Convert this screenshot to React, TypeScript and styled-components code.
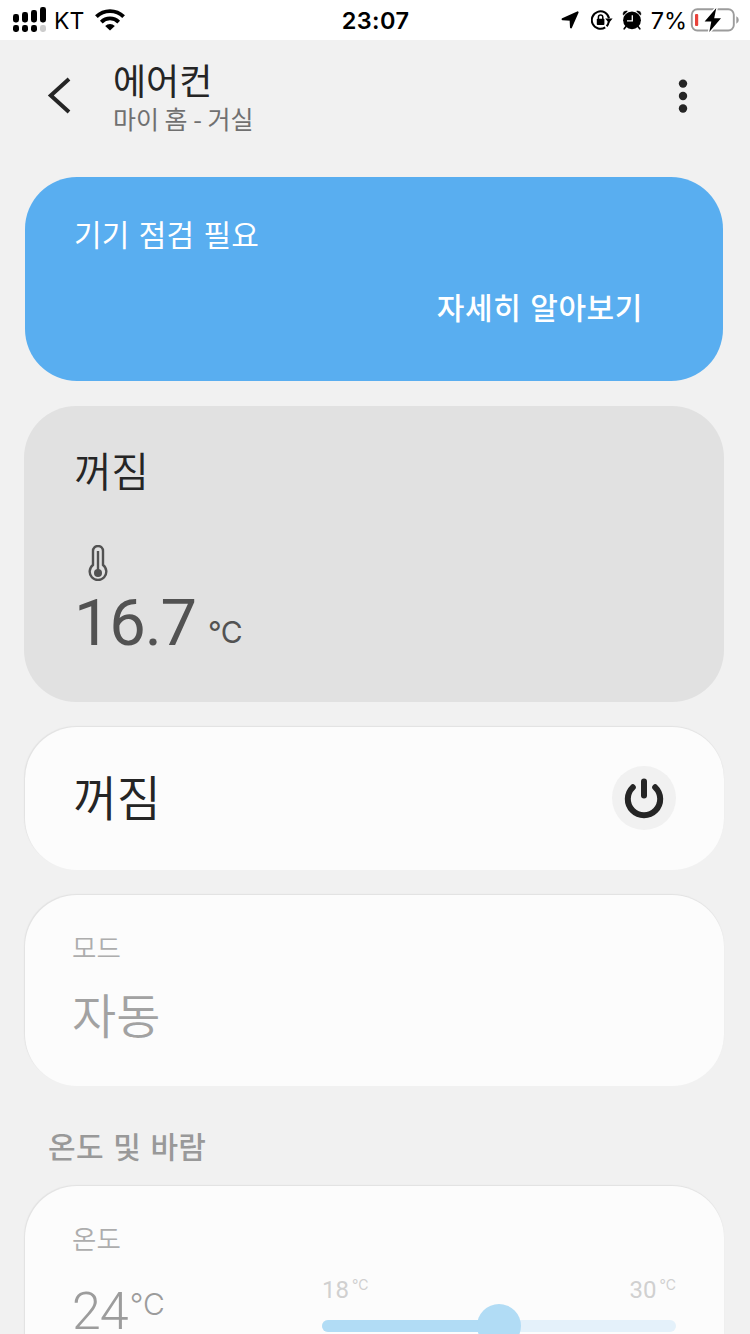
import React from 'react';
import styled, { createGlobalStyle } from 'styled-components';

const GlobalStyle = createGlobalStyle`
  * { box-sizing: border-box; }
  html, body { margin: 0; padding: 0; background: #f1f1f1; overflow: hidden; }
  body { font-family: Roboto, "Noto Sans CJK KR", sans-serif; color: #252525; }
`;

const Screen = styled.div`
  width: 750px;
  height: 1334px;
  overflow: hidden;
  display: flex;
  flex-direction: column;
  background: #f1f1f1;
`;

const StatusBar = styled.div`
  flex: none;
  height: 40px;
  display: grid;
  grid-template-columns: 1fr auto 1fr;
  align-items: center;
  padding: 0 10px 0 13px;
  background: #fff;
  color: #000;
  font-family: Inter, "Liberation Sans", sans-serif;
`;

const StatusGroup = styled.div<{ $end?: boolean }>`
  display: flex;
  align-items: center;
  justify-content: ${(p) => (p.$end ? 'flex-end' : 'flex-start')};
  height: 40px;
  svg { flex: none; display: block; }
`;

const StatusText = styled.span<{ $weight?: number; $size?: number; $spacing?: number }>`
  font-size: ${(p) => p.$size ?? 23}px;
  font-weight: ${(p) => p.$weight ?? 400};
  letter-spacing: ${(p) => p.$spacing ?? 0}px;
  line-height: 38px;
  padding-top: 2px;
  white-space: nowrap;
`;

const Clock = styled(StatusText)`
  padding-right: 2px;
`;

const Header = styled.header`
  flex: none;
  height: 137px;
  display: flex;
  align-items: flex-start;
  padding: 19px 57px 0 45px;
`;

const IconButton = styled.button<{ $width: number; $top: number }>`
  border: 0;
  padding: 0;
  background: none;
  width: ${(p) => p.$width}px;
  height: 40px;
  margin-top: ${(p) => p.$top}px;
  display: flex;
  svg { display: block; }
`;

const Titles = styled.div`
  flex: 1;
  padding-left: 38px;
`;

const Text = styled.div<{
  $size: number; $line: number; $weight?: number; $color?: string; $spacing?: number; $word?: number;
}>`
  font-family: "Noto Sans CJK KR", sans-serif;
  font-size: ${(p) => p.$size}px;
  line-height: ${(p) => p.$line}px;
  font-weight: ${(p) => p.$weight ?? 400};
  color: ${(p) => p.$color ?? '#252525'};
  letter-spacing: ${(p) => p.$spacing ?? 0}px;
  word-spacing: ${(p) => p.$word ?? 0}px;
  white-space: nowrap;
`;

const Card = styled.section<{ $height: number; $gap: number; $pad: string }>`
  flex: none;
  height: ${(p) => p.$height}px;
  margin: 0 26px ${(p) => p.$gap}px 25px;
  padding: ${(p) => p.$pad};
  border-radius: 52px;
  background: #fcfcfc;
  box-shadow: -0.5px -1px 1px #e2e2e2;
`;

const AlertCard = styled(Card)`
  margin-right: 27px;
  background: #59aef0;
  box-shadow: none;
  display: flex;
  flex-direction: column;
  justify-content: space-between;
`;

const AlertAction = styled(Text)`
  align-self: flex-end;
`;

const StateCard = styled(Card)`
  margin-left: 24px;
  background: #e1e1e1;
  box-shadow: none;
`;

const PowerCard = styled(Card)`
  display: flex;
  align-items: flex-start;
  justify-content: space-between;
`;

const PowerButton = styled.button`
  width: 64px;
  height: 64px;
  margin-top: 6px;
  border: 0;
  padding: 0;
  border-radius: 50%;
  background: #f1f1f1;
  svg { display: block; }
`;

const ThermoIcon = styled.svg`
  display: block;
  margin: 51px 0 0 14px;
`;

const Reading = styled.div<{ $top: number; $gap: number; $align?: string }>`
  display: flex;
  align-items: ${(p) => p.$align ?? 'baseline'};
  gap: ${(p) => p.$gap}px;
  margin-top: ${(p) => p.$top}px;
`;

const Num = styled.span<{
  $size: number; $line: number; $color: string; $weight?: number; $spacing?: number;
}>`
  font-family: Roboto, sans-serif;
  font-size: ${(p) => p.$size}px;
  line-height: ${(p) => p.$line}px;
  font-weight: ${(p) => p.$weight ?? 400};
  color: ${(p) => p.$color};
  letter-spacing: ${(p) => p.$spacing ?? 0}px;
  white-space: nowrap;
`;

const Unit = styled(Num)`
  font-family: Inter, sans-serif;
`;

const RoomUnit = styled(Unit)`
  margin-bottom: 5px;
`;

const SectionTitle = styled(Text)`
  flex: none;
  margin: 0 0 20px 48px;
`;

const TempRow = styled.div`
  display: flex;
  justify-content: space-between;
  margin-top: 14px;
`;

const SliderBox = styled.div`
  width: 354px;
  padding-top: 6px;
`;

const Labels = styled.div`
  display: flex;
  justify-content: space-between;
`;

const Track = styled.div`
  display: flex;
  align-items: center;
  height: 12px;
  margin-top: 16px;
  border-radius: 6px;
  background: #e4f1fa;
`;

const Fill = styled.div`
  height: 12px;
  border-radius: 6px 0 0 6px;
  background: #b1dcf5;
`;

const Thumb = styled.div`
  flex: none;
  width: 44px;
  height: 44px;
  margin-left: -22px;
  border-radius: 50%;
  background: #b1dcf5;
`;

const Signal = () => (
  <svg width="34" height="26" viewBox="0 0 34 26">
    <rect x="0" y="7" width="6" height="8.5" rx="2.4" />
    <rect x="9" y="5" width="6" height="10.5" rx="2.4" />
    <rect x="18" y="3" width="6" height="12.5" rx="2.4" />
    <rect x="27" y="0" width="6" height="15.5" rx="2.4" />
    <rect x="0" y="18" width="6" height="7" rx="2.4" />
    <rect x="9" y="18" width="6" height="7" rx="2.4" />
    <rect x="18" y="18" width="6" height="7" rx="2.4" />
    <rect x="27" y="18" width="6" height="7" rx="2.4" fill="#ccc" />
  </svg>
);

const Wifi = () => (
  <svg width="30" height="22" viewBox="0 0 30 22" fill="none" stroke="#000">
    <path d="M1.4 7.6A19.6 19.6 0 0 1 28.6 7.6" strokeWidth="3.9" />
    <path d="M6.3 13.1A12.2 12.2 0 0 1 23.7 13.1" strokeWidth="3.8" />
    <path d="M10.2 17A6.8 6.8 0 0 1 19.8 17L15 21.6Z" fill="#000" stroke="none" />
  </svg>
);

const LocationArrow = () => (
  <svg width="18" height="18" viewBox="0 0 18 18" stroke="#000" strokeWidth="2" strokeLinejoin="round">
    <path d="M16.600 1.400 10 16.400 9.600 8.800 1.600 8.200Z" />
  </svg>
);

const RotationLock = () => (
  <svg width="22" height="20" viewBox="0 0 22 20" fill="none" stroke="#000">
    <path d="M14.200 17.400A8.700 8.700 0 1 1 18 8.200" strokeWidth="2" />
    <path d="M17.800 11.600A8.700 8.700 0 0 1 15.600 16.200" strokeWidth="2" />
    <path d="M14.200 8.400H21.600L17.900 13Z" fill="#000" stroke="none" />
    <rect x="5.800" y="8.700" width="7.600" height="6.400" rx=".8" fill="#000" stroke="none" />
    <path d="M7.400 9V7.200A2.200 2.200 0 0 1 11.800 7.200V9" strokeWidth="1.500" />
  </svg>
);

const Alarm = () => (
  <svg width="20" height="20" viewBox="0 0 20 20">
    <circle cx="10" cy="10.300" r="8.900" />
    <path d="M.8 5Q0 .8 4.500.4L6.200 1 1.600 5.600ZM19.200 5Q20 .8 15.500.4L13.800 1 18.400 5.600Z" stroke="#fff" strokeWidth=".5" />
    <path d="M4 16.500 2.200 18.800M16 16.500 17.800 18.800" stroke="#000" strokeWidth="1.700" strokeLinecap="round" />
    <path d="M10.300 5.200V10.900H5" fill="none" stroke="#fff" strokeWidth="1.300" />
  </svg>
);

const Battery = () => (
  <svg width="50" height="24" viewBox="0 0 50 24">
    <rect x="1.800" y="1.300" width="42" height="21.200" rx="5.500" fill="#fff" stroke="#9c9c9c" strokeWidth="1.900" />
    <path d="M46.300 8.300Q48.800 9.500 48.800 12 48.800 14.500 46.300 15.700Z" fill="#9c9c9c" />
    <rect x="5" y="6" width="3.200" height="12" rx="1" fill="#e8433c" />
    <path d="M26.300 0 14.600 13.400H21.300L19.300 24 31 10.200H24.200Z" stroke="#fff" strokeWidth="3" />
    <path d="M26.300 0 14.600 13.400H21.300L19.300 24 31 10.200H24.200Z" />
  </svg>
);

const Gap = styled.span<{ $w: number }>`
  flex: none;
  width: ${(p) => p.$w}px;
`;

export default function App() {
  return (
    <>
      <GlobalStyle />
      <Screen>
        <StatusBar>
          <StatusGroup>
            <Signal />
            <Gap $w={7} />
            <StatusText>KT</StatusText>
            <Gap $w={11} />
            <Wifi />
          </StatusGroup>
          <Clock $weight={600} $size={23.5} $spacing={0.4}>23:07</Clock>
          <StatusGroup $end>
            <LocationArrow />
            <Gap $w={12} />
            <RotationLock />
            <Gap $w={9} />
            <Alarm />
            <Gap $w={9} />
            <StatusText $size={23.5}>7%</StatusText>
            <Gap $w={3} />
            <Battery />
          </StatusGroup>
        </StatusBar>

        <Header>
          <IconButton $width={30} $top={17} aria-label="뒤로">
            <svg width="30" height="40" viewBox="0 0 30 40" fill="none" stroke="#252525" strokeWidth="4">
              <path d="M24 3 5.800 19.500 24 36" />
            </svg>
          </IconButton>
          <Titles>
            <Text $size={36} $line={40}>에어컨</Text>
            <Text $size={25} $line={38} $color="#707070">마이 홈 - 거실</Text>
          </Titles>
          <IconButton $width={20} $top={17} aria-label="더보기">
            <svg width="20" height="40" viewBox="0 0 20 40" fill="#252525">
              <circle cx="10" cy="7.600" r="4.200" />
              <circle cx="10" cy="20" r="4.200" />
              <circle cx="10" cy="32.500" r="4.200" />
            </svg>
          </IconButton>
        </Header>

        <AlertCard $height={204} $gap={25} $pad="35px 80px 54px 49px">
          <Text $size={30} $line={42} $color="#fff" $spacing={0.2} $word={2.2}>기기 점검 필요</Text>
          <AlertAction $size={30} $line={42} $weight={500} $color="#fff" $spacing={0.6} $word={1.5}>
            자세히 알아보기
          </AlertAction>
        </AlertCard>

        <StateCard $height={296} $gap={25} $pad="38px 50px">
          <Text $size={41} $line={50} $weight={350} $spacing={-0.5}>꺼짐</Text>
          <ThermoIcon width="20" height="38" viewBox="0 0 20 38" fill="none" stroke="#525252">
            <path d="M5 20V6A5 5 0 0 1 15 6V20A8.300 8.300 0 1 1 5 20Z" strokeWidth="2.400" />
            <path d="M10 6V27" strokeWidth="2.400" />
            <circle cx="10" cy="28" r="4" fill="#525252" stroke="none" />
          </ThermoIcon>
          <Reading $top={2} $gap={12} $align="flex-end">
            <Num $size={65} $line={76} $color="#525252" $spacing={-1.2}>16.7</Num>
            <RoomUnit $size={30} $line={48} $color="#525252" $spacing={-0.5}>°C</RoomUnit>
          </Reading>
        </StateCard>

        <PowerCard $height={143} $gap={25} $pad="33px 48px 0 48px">
          <Text $size={48} $line={70} $weight={350} $spacing={-0.5}>꺼짐</Text>
          <PowerButton aria-label="전원">
            <svg width="64" height="64" viewBox="0 0 64 64" fill="none" stroke="#252525" strokeWidth="6" strokeLinecap="round">
              <path d="M20.800 21.300A16.200 16.200 0 1 0 43.200 21.300" />
              <path d="M32 15.500V29.500" />
            </svg>
          </PowerButton>
        </PowerCard>

        <Card $height={191} $gap={38} $pad="34px 47px">
          <Text $size={26.5} $line={36} $weight={350} $color="#adadad">모드</Text>
          <Text $size={48} $line={96} $weight={350} $color="#a2a2a2">자동</Text>
        </Card>

        <SectionTitle $size={30} $line={42} $weight={500} $color="#999" $spacing={0.3} $word={2.3}>
          온도 및 바람
        </SectionTitle>

        <Card $height={300} $gap={0} $pad="34px 48px 0 47px">
          <Text $size={26.5} $line={36} $weight={350} $color="#adadad">온도</Text>
          <TempRow>
            <Reading $top={10} $gap={2} $align="flex-start">
              <Num $size={52} $line={64} $weight={300} $color="#9c9c9c" $spacing={-1}>24</Num>
              <Unit $size={30} $line={48} $weight={300} $color="#9c9c9c">°C</Unit>
            </Reading>
            <SliderBox>
              <Labels>
                <Reading $top={0} $gap={3} $align="flex-start">
                  <Num $size={24} $line={28} $color="#d0d0d0">18</Num>
                  <Unit $size={14} $line={18} $color="#d0d0d0">°C</Unit>
                </Reading>
                <Reading $top={0} $gap={3} $align="flex-start">
                  <Num $size={24} $line={28} $color="#d0d0d0">30</Num>
                  <Unit $size={14} $line={18} $color="#d0d0d0">°C</Unit>
                </Reading>
              </Labels>
              <Track>
                <Fill style={{ width: '50%' }} />
                <Thumb />
              </Track>
            </SliderBox>
          </TempRow>
        </Card>
      </Screen>
    </>
  );
}
